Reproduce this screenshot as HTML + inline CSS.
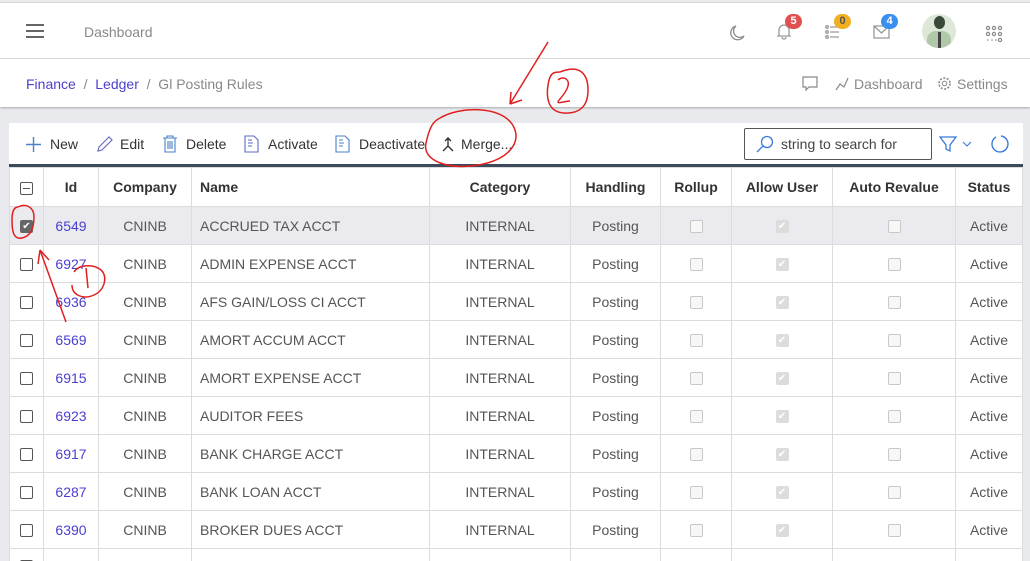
<!DOCTYPE html>
<html style="width:1030px;height:561px;overflow:hidden"><head><style>
*{box-sizing:border-box;margin:0;padding:0}
body{width:1030px;height:561px;overflow:hidden;background:#e9eaee;font-family:"Liberation Sans",sans-serif;font-size:14px;color:#333;position:relative}
.hdr{position:absolute;left:0;top:2px;width:1030px;height:57px;background:#fff;border-top:1px solid #d8d8d8;border-bottom:1px solid #dcdcdc}
.bc{position:absolute;left:0;top:59px;width:1030px;height:48px;background:#fff;box-shadow:0 1px 2px #aaa}
.tb{position:absolute;left:9px;top:123px;width:1014px;height:41px;background:#fff}
.dark{position:absolute;left:9px;top:164px;width:1014px;height:3px;background:#3d4a5c}
table{position:absolute;left:9px;top:167px;border-collapse:collapse;background:#fff;width:1014px}
td,th{border:1px solid #dcdcdf;height:38px;text-align:center;font-size:14px;color:#555}
th{font-weight:bold;color:#333;height:39px}
.l{text-align:left;padding-left:8px}
a{color:#4a3fd0;text-decoration:none}
.cb{display:inline-block;width:13px;height:13px;border:1px solid #555;border-radius:2px;vertical-align:middle;background:#fff}
.dc{display:inline-block;width:13px;height:13px;border:1px solid #c8c8c8;border-radius:2px;background:#f7f7f7;vertical-align:middle}
.dck{display:inline-block;width:13px;height:13px;border-radius:2px;background:#dcdcdc;vertical-align:middle;color:#fff;font-size:10px;line-height:13px}
.tbi{position:absolute;top:136px;font-size:14px;color:#333}
.badge{position:absolute;top:14px;height:15px;min-width:17px;border-radius:8px;color:#fff;font-size:11px;font-weight:bold;text-align:center;line-height:15px}
</style></head><body>
<div class="hdr"></div>
<div style="position:absolute;left:26px;top:24px;width:18px;height:2px;background:#666;box-shadow:0 6px #666,0 12px #666"></div>
<div style="position:absolute;left:84px;top:24px;color:#888;font-size:14px">Dashboard</div>
<svg style="position:absolute;left:726px;top:24px" width="20" height="20"><path d="M10 2a7 7 0 1 0 8 10a6 6 0 0 1-8-10z" fill="none" stroke="#888" stroke-width="1.3"/></svg>
<svg style="position:absolute;left:776px;top:22px" width="16" height="18"><path d="M3 13V8a5 5 0 0 1 10 0v5l1 1H2z M6 15a2 2 0 0 0 4 0" fill="none" stroke="#999" stroke-width="1.3"/></svg>
<div class="badge" style="left:785px;background:#e05050">5</div>
<svg style="position:absolute;left:825px;top:24px" width="16" height="16"><g stroke="#999" stroke-width="1.3" fill="none"><circle cx="2" cy="3" r="1.3"/><circle cx="2" cy="8" r="1.3"/><circle cx="2" cy="13" r="1.3"/><path d="M5 3h9M5 8h9M5 13h9"/></g></svg>
<div class="badge" style="left:834px;background:#f0b020;color:#555">0</div>
<svg style="position:absolute;left:873px;top:25px" width="17" height="14"><path d="M1 1h15v12H1z M1 1l7.5 7 7.5-7" fill="none" stroke="#999" stroke-width="1.3"/></svg>
<div class="badge" style="left:881px;background:#3a90f0">4</div>
<div style="position:absolute;left:922px;top:14px;width:34px;height:34px;border-radius:50%;background:#dde8d8;overflow:hidden"><div style="position:absolute;left:12px;top:2px;width:11px;height:13px;border-radius:50%;background:#3a4a38"></div><div style="position:absolute;left:5px;top:17px;width:24px;height:20px;border-radius:40% 40% 0 0;background:#b0c8a8"></div><div style="position:absolute;left:16px;top:18px;width:3px;height:16px;background:#444"></div></div>
<svg style="position:absolute;left:985px;top:25px" width="18" height="18"><g fill="none" stroke="#888" stroke-width="1.2"><circle cx="3" cy="3" r="1.6"/><circle cx="9" cy="3" r="1.6"/><circle cx="15" cy="3" r="1.6"/><circle cx="3" cy="9" r="1.6"/><circle cx="9" cy="9" r="1.6"/><circle cx="15" cy="9" r="1.6"/><circle cx="15" cy="15" r="1.6"/></g><g fill="#888"><circle cx="3" cy="15" r=".8"/><circle cx="7" cy="15" r=".8"/><circle cx="11" cy="15" r=".8"/></g></svg>

<div class="bc"></div>
<div style="position:absolute;left:26px;top:76px;color:#888"><a>Finance</a> &nbsp;/&nbsp; <a>Ledger</a> &nbsp;/&nbsp; Gl Posting Rules</div>
<svg style="position:absolute;left:802px;top:76px" width="16" height="15"><path d="M1 1h14v10H7l-3 3v-3H1z" fill="none" stroke="#888" stroke-width="1.2"/></svg>
<svg style="position:absolute;left:834px;top:76px" width="16" height="16"><path d="M2 14l4-6 4 3 4-9" fill="none" stroke="#888" stroke-width="1.2"/></svg>
<div style="position:absolute;left:854px;top:76px;color:#888">Dashboard</div>
<svg style="position:absolute;left:937px;top:76px" width="15" height="15"><circle cx="7.5" cy="7.5" r="5.5" fill="none" stroke="#888" stroke-width="1.6" stroke-dasharray="2 1.5"/><circle cx="7.5" cy="7.5" r="2.3" fill="none" stroke="#888"/></svg>
<div style="position:absolute;left:957px;top:76px;color:#888">Settings</div>

<div class="tb"></div>
<svg style="position:absolute;left:25px;top:136px" width="17" height="17"><path d="M8.5 1v15M1 8.5h15" stroke="#4a80c8" stroke-width="1.4"/></svg>
<div class="tbi" style="left:50px">New</div>
<svg style="position:absolute;left:96px;top:135px" width="18" height="18"><path d="M2 16l1-4L13 2l3 3L6 15z" fill="none" stroke="#6a70c0" stroke-width="1.2"/></svg>
<div class="tbi" style="left:120px">Edit</div>
<svg style="position:absolute;left:162px;top:135px" width="16" height="18"><path d="M1 3h14M5 3V1h6v2M3 3v14h10V3M6 6v8M8 6v8M10 6v8" fill="none" stroke="#4a80c8" stroke-width="1.1"/></svg>
<div class="tbi" style="left:186px">Delete</div>
<svg style="position:absolute;left:244px;top:135px" width="16" height="18"><path d="M1 1h9l4 4v12H1z M4 5h4M4 8h5M4 11h4" fill="none" stroke="#5a6ac0" stroke-width="1.1"/></svg>
<div class="tbi" style="left:268px">Activate</div>
<svg style="position:absolute;left:335px;top:135px" width="16" height="18"><path d="M1 1h9l4 4v12H1z M4 5h4M4 8h5M4 11h4" fill="none" stroke="#4a80c8" stroke-width="1.1"/></svg>
<div class="tbi" style="left:359px">Deactivate</div>
<svg style="position:absolute;left:441px;top:137px" width="14" height="16"><path d="M7 1v8L2 14M7 9l5 5M4 4l3-3 3 3" fill="none" stroke="#333" stroke-width="1.4"/></svg>
<div class="tbi" style="left:461px">Merge...</div>
<div style="position:absolute;left:744px;top:128px;width:188px;height:32px;border:1px solid #555;border-radius:2px"></div>
<svg style="position:absolute;left:756px;top:135px" width="18" height="18"><circle cx="11" cy="7" r="5.5" fill="none" stroke="#3a7ad8" stroke-width="1.3"/><path d="M7 11L1 17" stroke="#3a7ad8" stroke-width="1.3"/></svg>
<div style="position:absolute;left:781px;top:136px;color:#444">string to search for</div>
<svg style="position:absolute;left:939px;top:135px" width="40" height="18"><path d="M1 2h16l-6 8v6l-4-2v-4z" fill="none" stroke="#3a7ad8" stroke-width="1.3"/><path d="M24 7l4 4 4-4" fill="none" stroke="#3a7ad8" stroke-width="1.1"/></svg>
<svg style="position:absolute;left:990px;top:134px" width="20" height="20"><path d="M6 3a8 8 0 1 0 5-1" fill="none" stroke="#3a7ad8" stroke-width="1.4"/></svg>
<div class="dark"></div>

<table>
<tr><th style="width:34px"><span class="cb" style="position:relative"><span style="position:absolute;left:2px;top:5px;width:7px;height:1.5px;background:#555"></span></span></th><th style="width:55px">Id</th><th style="width:93px">Company</th><th class="l" style="width:238px">Name</th><th style="width:141px">Category</th><th style="width:90px">Handling</th><th style="width:71px">Rollup</th><th style="width:101px">Allow User</th><th style="width:123px">Auto Revalue</th><th>Status</th></tr>
<tr style="background:#ebebef"><td><span class="cb" style="background:#666;color:#fff;font-size:10px;line-height:12px;border-color:#666">✔</span></td><td><a>6549</a></td><td>CNINB</td><td class="l">ACCRUED TAX ACCT</td><td>INTERNAL</td><td>Posting</td><td><span class="dc"></span></td><td><span class="dck">✔</span></td><td><span class="dc"></span></td><td>Active</td></tr>
<tr><td><span class="cb"></span></td><td><a>6927</a></td><td>CNINB</td><td class="l">ADMIN EXPENSE ACCT</td><td>INTERNAL</td><td>Posting</td><td><span class="dc"></span></td><td><span class="dck">✔</span></td><td><span class="dc"></span></td><td>Active</td></tr>
<tr><td><span class="cb"></span></td><td><a>6936</a></td><td>CNINB</td><td class="l">AFS GAIN/LOSS CI ACCT</td><td>INTERNAL</td><td>Posting</td><td><span class="dc"></span></td><td><span class="dck">✔</span></td><td><span class="dc"></span></td><td>Active</td></tr>
<tr><td><span class="cb"></span></td><td><a>6569</a></td><td>CNINB</td><td class="l">AMORT ACCUM ACCT</td><td>INTERNAL</td><td>Posting</td><td><span class="dc"></span></td><td><span class="dck">✔</span></td><td><span class="dc"></span></td><td>Active</td></tr>
<tr><td><span class="cb"></span></td><td><a>6915</a></td><td>CNINB</td><td class="l">AMORT EXPENSE ACCT</td><td>INTERNAL</td><td>Posting</td><td><span class="dc"></span></td><td><span class="dck">✔</span></td><td><span class="dc"></span></td><td>Active</td></tr>
<tr><td><span class="cb"></span></td><td><a>6923</a></td><td>CNINB</td><td class="l">AUDITOR FEES</td><td>INTERNAL</td><td>Posting</td><td><span class="dc"></span></td><td><span class="dck">✔</span></td><td><span class="dc"></span></td><td>Active</td></tr>
<tr><td><span class="cb"></span></td><td><a>6917</a></td><td>CNINB</td><td class="l">BANK CHARGE ACCT</td><td>INTERNAL</td><td>Posting</td><td><span class="dc"></span></td><td><span class="dck">✔</span></td><td><span class="dc"></span></td><td>Active</td></tr>
<tr><td><span class="cb"></span></td><td><a>6287</a></td><td>CNINB</td><td class="l">BANK LOAN ACCT</td><td>INTERNAL</td><td>Posting</td><td><span class="dc"></span></td><td><span class="dck">✔</span></td><td><span class="dc"></span></td><td>Active</td></tr>
<tr><td><span class="cb"></span></td><td><a>6390</a></td><td>CNINB</td><td class="l">BROKER DUES ACCT</td><td>INTERNAL</td><td>Posting</td><td><span class="dc"></span></td><td><span class="dck">✔</span></td><td><span class="dc"></span></td><td>Active</td></tr>
<tr><td style="vertical-align:top;padding-top:8px"><span class="cb"></span></td><td></td><td></td><td></td><td></td><td></td><td></td><td></td><td></td><td></td></tr>
</table>

<svg style="position:absolute;left:0;top:0" width="1030" height="561"><g fill="none" stroke="#e02020" stroke-width="1.5">
<path d="M18 207c8-4 16 0 16 10s-3 19-12 21-10-8-10-18 3-13 6-13"/>
<path d="M66 322L40 250M40 250l-2 14M40 250l9 10"/>
<path d="M74 272c5-8 20-8 27-2s4 20-7 25-22 0-22-10"/><path d="M86 268l2 20"/>
<path d="M548 42l-38 62M510 104l12-4M510 104l1-12"/>
<path d="M560 72c20-8 28 2 28 18s-8 24-24 23-18-15-16-28 6-13 12-13"/><path d="M558 80c4-4 12-2 10 6s-10 14-10 16 8-1 12-1"/>
<path d="M440 118c20-12 60-12 72 6s-4 36-34 41-56-4-52-22 8-22 14-25"/>
</g></svg>
</body></html>
